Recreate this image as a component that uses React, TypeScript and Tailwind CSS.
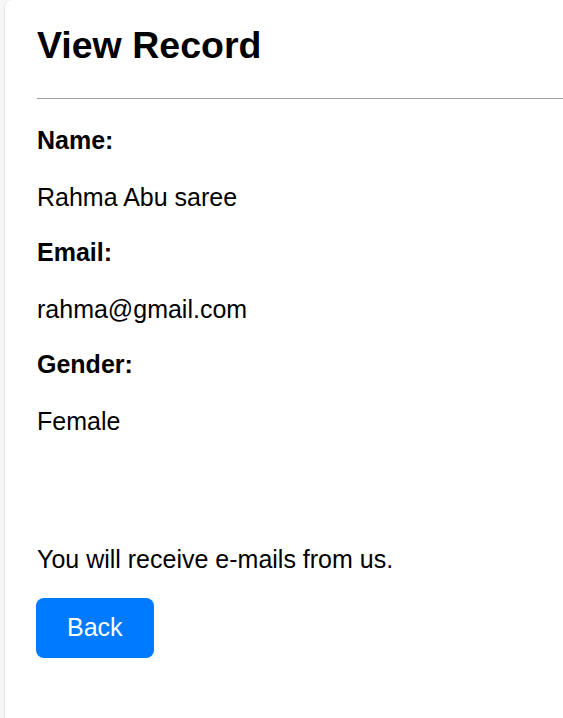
const record = [
  { label: "Name:", value: "Rahma Abu saree" },
  { label: "Email:", value: "rahma@gmail.com" },
  { label: "Gender:", value: "Female" },
];

export default function App() {
  return (
    <div className="min-h-screen bg-[#f7f7f7] pl-1 font-['Liberation_Sans',Arial,sans-serif] text-black">
      <div className="min-h-screen rounded-tl-lg border-l border-[#e6e6e6] bg-white pl-8 pt-[23px]">
        <h2 className="text-[37.5px] font-bold leading-[44px]">View Record</h2>
        <hr className="mt-[31px] border-0 border-t border-[#a0a0a0]" />

        <div className="mt-[27px] text-[25px] leading-[28px]">
          {record.map((r) => (
            <div key={r.label}>
              <p className="mb-[29px] font-bold">{r.label}</p>
              <p className="mb-[27px]">{r.value}</p>
            </div>
          ))}
        </div>

        <p className="mt-[110px] text-[25px] leading-[28px]">You will receive e-mails from us.</p>

        <button className="-ml-px mt-[25px] h-[60px] rounded-lg bg-[#007bff] px-[31px] text-[25px] text-white">
          Back
        </button>
      </div>
    </div>
  );
}
